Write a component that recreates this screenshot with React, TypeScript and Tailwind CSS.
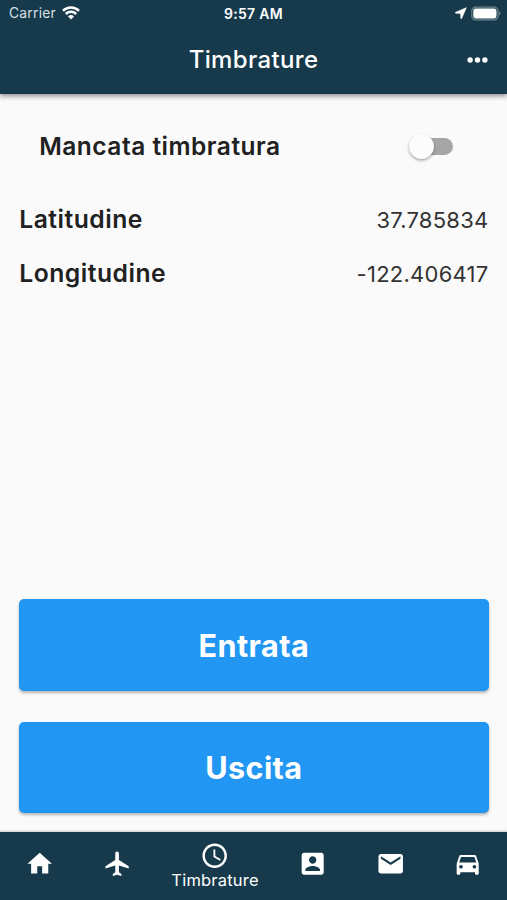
import type { ReactNode } from "react";

function Icon({ children }: { children: ReactNode }) {
  return (
    <svg viewBox="0 0 24 24" fill="currentColor" className="h-[29.4px] w-[29.4px] shrink-0">
      {children}
    </svg>
  );
}

function StatusBar() {
  return (
    <div className="grid h-[26px] grid-cols-3 items-center pt-px text-[13.4px] leading-none text-white">
      <div className="flex items-center gap-[6px] pl-[9px] text-[#d9e1e5]">
        <span className="pt-px text-[13.8px] tracking-[0.25px]">Carrier</span>
        <svg viewBox="0 0 18 14" className="h-[14px] w-[18px]" fill="none" stroke="white" strokeWidth="2.5">
          <path d="M1 4.8a11.4 11.4 0 0 1 16 0" />
          <path d="M3.8 8a7.4 7.4 0 0 1 10.4 0" />
          <path d="M6 10.4a4.4 4.4 0 0 1 6 0L9 13.6Z" fill="white" stroke="none" />
        </svg>
      </div>
      <span className="pt-px text-center text-[14px] font-semibold tracking-[0.3px]">9:57 AM</span>
      <div className="flex items-center justify-end gap-[4.5px] pr-[6px]">
        <svg viewBox="0 0 12 12" className="mb-px h-3 w-3" fill="white" stroke="white" strokeWidth=".6" strokeLinejoin="round">
          <path d="M11.300.7.6 5.300c-.5.3-.4.9.1.9l4.900.2.2 4.900c0 .5.6.6.9.1Z" />
        </svg>
        <svg viewBox="0 0 30 15" className="h-[15px] w-[30px]">
          <rect x=".8" y="1.1" width="26.2" height="12.8" rx="4" fill="none" stroke="#6f858f" strokeWidth="1.2" />
          <rect x="2.3" y="2.6" width="23.2" height="9.8" rx="2.4" fill="white" />
          <path d="M28.1 5.5c1.9.8 1.9 3.2 0 4Z" fill="#6f858f" />
        </svg>
      </div>
    </div>
  );
}

function Header() {
  return (
    <header className="relative z-10 h-[93.5px] shrink-0 bg-[#163a4b] shadow-[0_2px_5px_rgba(0,0,0,0.45)]">
      <StatusBar />
      <div className="grid h-[67px] grid-cols-[1fr_auto_1fr] items-center text-white">
        <span />
        <h1 className="text-[24px] leading-none font-medium tracking-[0.35px]">Timbrature</h1>
        <svg viewBox="0 0 21 6" className="mr-[19px] h-[6px] w-[21px] justify-self-end" fill="white">
          <circle cx="3.1" cy="3" r="2.7" />
          <circle cx="10.5" cy="3" r="2.7" />
          <circle cx="17.9" cy="3" r="2.7" />
        </svg>
      </div>
    </header>
  );
}

function Toggle() {
  return (
    <div className="flex h-[25px] w-[44px] items-center justify-end">
      <div className="flex h-[17px] w-[40px] items-center rounded-full bg-[#a6a6a6]">
        <div className="-ml-[4px] h-[25px] w-[25px] shrink-0 rounded-full bg-[#fcfcfc] shadow-[0_1.5px_3px_rgba(0,0,0,0.35)]" />
      </div>
    </div>
  );
}

function ActionButton({ children }: { children: ReactNode }) {
  return (
    <button className="flex h-[91.5px] w-full items-center justify-center rounded-[5px] bg-[#2196f3] pt-[3px] text-[30.6px] leading-none font-bold tracking-[0.4px] text-white shadow-[0_2px_3px_rgba(0,0,0,0.28)]">
      {children}
    </button>
  );
}

function NavBar() {
  return (
    <nav className="grid h-[68.5px] shrink-0 grid-cols-[2fr_2fr_3fr_2fr_2fr_2fr] bg-[#163a4b] pl-px text-white shadow-[0_-1px_2px_rgba(0,0,0,0.2)]">
      <div className="flex items-center justify-center pb-[3.5px]">
        <Icon><path d="M10 20v-6h4v6h5v-8h3L12 3 2 12h3v8z" /></Icon>
      </div>
      <div className="flex items-center justify-center pb-[3.5px]">
        <Icon><path d="M21 16v-2l-8-5V3.500c0-.83-.67-1.500-1.500-1.500S10 2.670 10 3.500V9l-8 5v2l8-2.500V19l-2 1.500V22l3.500-1 3.500 1v-1.500L13 19v-5.500z" /></Icon>
      </div>
      <div className="flex flex-col items-center pt-[9px]">
        <Icon><path d="M11.990 2C6.470 2 2 6.480 2 12s4.470 10 9.990 10C17.520 22 22 17.520 22 12S17.520 2 11.990 2zM12 20c-4.420 0-8-3.580-8-8s3.580-8 8-8 8 3.580 8 8-3.580 8-8 8zm.5-13H11v6l5.250 3.150.75-1.230-4.500-2.670z" /></Icon>
        <span className="mt-[2px] text-[16.5px] leading-[17px] tracking-[0.2px]">Timbrature</span>
      </div>
      <div className="flex items-center justify-center pb-[3.5px]">
        <Icon><path d="M3 5v14c0 1.100.89 2 2 2h14c1.100 0 2-.9 2-2V5c0-1.100-.9-2-2-2H5c-1.110 0-2 .9-2 2zm12 4c0 1.660-1.340 3-3 3s-3-1.340-3-3 1.340-3 3-3 3 1.340 3 3zm-9 8c0-2 4-3.100 6-3.100s6 1.100 6 3.100v1H6v-1z" /></Icon>
      </div>
      <div className="flex items-center justify-center pb-[3.5px]">
        <Icon><path d="M20 4H4c-1.100 0-1.990.9-1.990 2L2 18c0 1.100.9 2 2 2h16c1.100 0 2-.9 2-2V6c0-1.100-.9-2-2-2zm0 4l-8 5-8-5V6l8 5 8-5v2z" /></Icon>
      </div>
      <div className="flex items-center justify-center pb-[3.5px]">
        <Icon><path d="M18.920 6.010C18.720 5.420 18.160 5 17.500 5h-11c-.66 0-1.210.42-1.420 1.010L3 12v8c0 .55.45 1 1 1h1c.55 0 1-.45 1-1v-1h12v1c0 .55.45 1 1 1h1c.55 0 1-.45 1-1v-8l-2.080-5.990zM6.500 16c-.83 0-1.500-.67-1.500-1.500S5.670 13 6.500 13s1.500.67 1.500 1.500S7.330 16 6.500 16zm11 0c-.83 0-1.500-.67-1.500-1.500s.67-1.500 1.500-1.500 1.500.67 1.500 1.500-.67 1.500-1.500 1.500zM5 11l1.500-4.500h11L19 11H5z" /></Icon>
      </div>
    </nav>
  );
}

function CoordinateRow({ label, value }: { label: string; value: string }) {
  return (
    <div className="flex h-8 items-center justify-between">
      <span className="text-[24.7px] leading-none font-semibold tracking-[0.5px]">{label}</span>
      <span className="text-[22px] leading-none tracking-[0.25px] text-[#333333]">{value}</span>
    </div>
  );
}

export default function App() {
  return (
    <div className="flex h-[900px] w-[507px] flex-col overflow-hidden bg-[#fafafa] font-['Inter',sans-serif] text-[#212121]">
      <Header />
      <main className="flex min-h-0 flex-1 flex-col pr-[18.5px] pb-[18.5px] pl-[19.2px] whitespace-nowrap">
        <div className="mt-[37px] flex h-8 items-center justify-between pr-[36px] pl-5">
          <span className="text-[24.5px] leading-none font-semibold tracking-[0.5px]">Mancata timbratura</span>
          <Toggle />
        </div>
        <div className="mt-[41px] flex flex-col gap-[22px]">
          <CoordinateRow label="Latitudine" value="37.785834" />
          <CoordinateRow label="Longitudine" value="-122.406417" />
        </div>
        <div className="mt-auto flex flex-col gap-[31px]">
          <ActionButton>Entrata</ActionButton>
          <ActionButton>Uscita</ActionButton>
        </div>
      </main>
      <NavBar />
    </div>
  );
}
